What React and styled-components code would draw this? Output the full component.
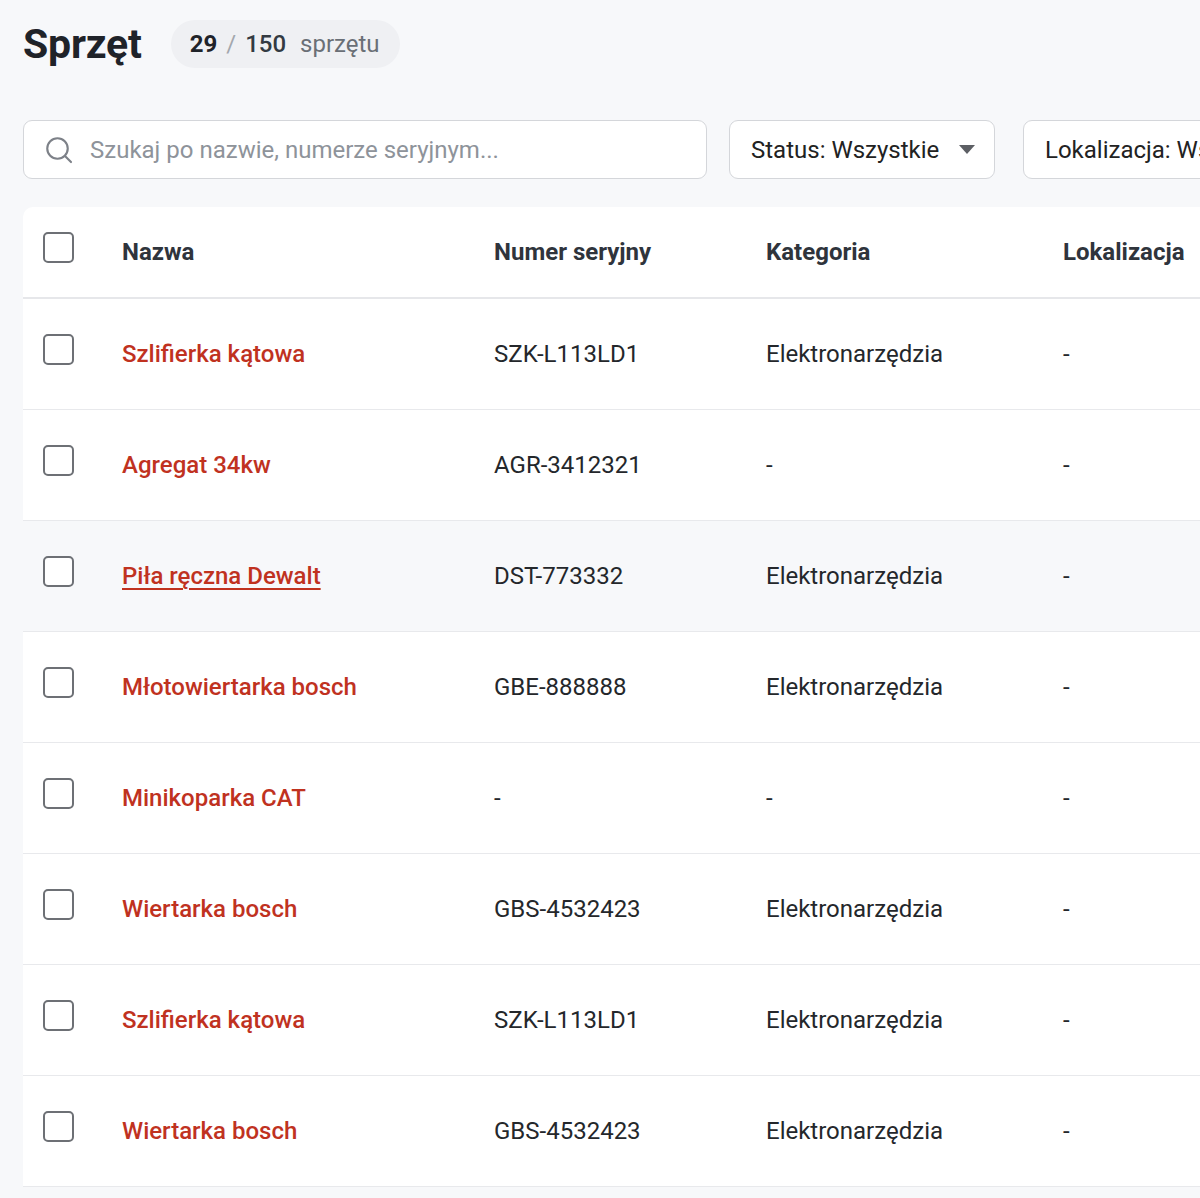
import React from "react";
import styled, { createGlobalStyle } from "styled-components";

const Global = createGlobalStyle`
  html, body { margin: 0; padding: 0; background: #f7f8fa; }
  body { font-family: Roboto, "Noto Sans", "Liberation Sans", sans-serif; color: #222; overflow-x: hidden; }
  * { box-sizing: border-box; }
`;

const Page = styled.div`
  width: 1200px;
  min-height: 1198px;
  padding: 18px 0 0 23px;
  overflow: hidden;
`;

const TitleRow = styled.div`
  display: flex;
  align-items: center;
  gap: 29px;
  height: 52px;
`;

const Title = styled.h1`
  margin: 0;
  font-size: 41px;
  font-weight: 700;
  color: #1f2329;
  letter-spacing: -0.2px;
  line-height: 52px;
`;

const Badge = styled.div`
  display: flex;
  align-items: center;
  height: 48px;
  padding: 0 20px 0 19px;
  border-radius: 24px;
  background: #eff0f3;
  font-size: 24px;
`;

const Num = styled.span`
  font-weight: ${(p) => (p.$bold ? 700 : 500)};
  color: ${(p) => (p.$bold ? "#1f2329" : "#333a42")};
`;

const Slash = styled.span`
  color: #a3a7ad;
  margin: 0 9px;
`;

const Unit = styled.span`
  color: #6a6f76;
  margin-left: 14px;
`;

const Filters = styled.div`
  display: flex;
  align-items: center;
  margin-top: 50px;
  gap: 22px;
  white-space: nowrap;
`;

const Search = styled.div`
  flex: 0 0 684px;
  height: 59px;
  display: flex;
  align-items: center;
  gap: 16px;
  padding: 0 20px;
  background: #fff;
  border: 1.5px solid #d4d6da;
  border-radius: 9px;
`;

const Placeholder = styled.span`
  font-size: 24px;
  color: #8e939a;
`;

const Select = styled.div`
  flex: 0 0 auto;
  width: ${(p) => p.$w}px;
  margin-left: ${(p) => p.$ml || 0}px;
  height: 59px;
  display: flex;
  align-items: center;
  justify-content: space-between;
  padding: 0 20px 0 21px;
  background: #fff;
  border: 1.5px solid #d4d6da;
  border-radius: 9px;
  font-size: 24px;
  color: #222;
`;

const Caret = styled.span`
  width: 0;
  height: 0;
  border-left: 8px solid transparent;
  border-right: 8px solid transparent;
  border-top: 9px solid #5c5f64;
  margin-left: 20px;
`;

const Card = styled.div`
  margin-top: 28px;
  width: 1400px;
  background: #fff;
  border-radius: 10px 0 0 0;
`;

const Row = styled.div`
  display: grid;
  grid-template-columns: 99px 372px 272px 297px 1fr;
  align-items: center;
  height: ${(p) => (p.$head ? 92 : 111)}px;
  border-bottom: ${(p) => (p.$head ? "2px solid #e6e7ea" : "1.5px solid #e8e9ec")};
  background: ${(p) => (p.$hover ? "#f7f8fa" : "transparent")};
  font-size: 24px;
`;

const BoxCell = styled.div`
  padding-left: 20px;
  display: flex;
  align-items: center;
`;

const Checkbox = styled.span`
  width: 31px;
  height: 31px;
  border: 2px solid #6d7075;
  border-radius: 5px;
  background: #fff;
  margin-bottom: 9px;
`;

const Head = styled.div`
  font-weight: 700;
  color: #2f343c;
`;

const Name = styled.a`
  justify-self: start;
  color: #c0321f;
  font-weight: 500;
  text-decoration: ${(p) => (p.$u ? "underline" : "none")};
  text-decoration-thickness: 2px;
  text-underline-offset: 4px;
`;

const Cell = styled.div`
  color: #24272b;
`;

const SearchIcon = () => (
  <svg width="30" height="30" viewBox="0 0 24 24" fill="none" stroke="#7d8188" strokeWidth="1.7" strokeLinecap="round">
    <circle cx="10.8" cy="10.8" r="8.2" />
    <path d="M17 17l4.6 4.6" />
  </svg>
);

const rows = [
  ["Szlifierka kątowa", "SZK-L113LD1", "Elektronarzędzia"],
  ["Agregat 34kw", "AGR-3412321", "-"],
  ["Piła ręczna Dewalt", "DST-773332", "Elektronarzędzia", true],
  ["Młotowiertarka bosch", "GBE-888888", "Elektronarzędzia"],
  ["Minikoparka CAT", "-", "-"],
  ["Wiertarka bosch", "GBS-4532423", "Elektronarzędzia"],
  ["Szlifierka kątowa", "SZK-L113LD1", "Elektronarzędzia"],
  ["Wiertarka bosch", "GBS-4532423", "Elektronarzędzia"],
];

export default function App() {
  return (
    <>
      <Global />
      <Page>
        <TitleRow>
          <Title>Sprzęt</Title>
          <Badge>
            <Num $bold>29</Num>
            <Slash>/</Slash>
            <Num>150</Num>
            <Unit>sprzętu</Unit>
          </Badge>
        </TitleRow>
        <Filters>
          <Search>
            <SearchIcon />
            <Placeholder>Szukaj po nazwie, numerze seryjnym...</Placeholder>
          </Search>
          <Select $w={266}>
            Status: Wszystkie
            <Caret />
          </Select>
          <Select $w={340} $ml={6}>
            Lokalizacja: Wszystkie
            <Caret />
          </Select>
        </Filters>
        <Card>
          <Row $head>
            <BoxCell><Checkbox /></BoxCell>
            <Head>Nazwa</Head>
            <Head>Numer seryjny</Head>
            <Head>Kategoria</Head>
            <Head>Lokalizacja</Head>
          </Row>
          {rows.map(([n, s, c, h], i) => (
            <Row key={i} $hover={h}>
              <BoxCell><Checkbox /></BoxCell>
              <Name href="#" $u={h} onClick={(e) => e.preventDefault()}>{n}</Name>
              <Cell>{s}</Cell>
              <Cell>{c}</Cell>
              <Cell>-</Cell>
            </Row>
          ))}
        </Card>
      </Page>
    </>
  );
}
